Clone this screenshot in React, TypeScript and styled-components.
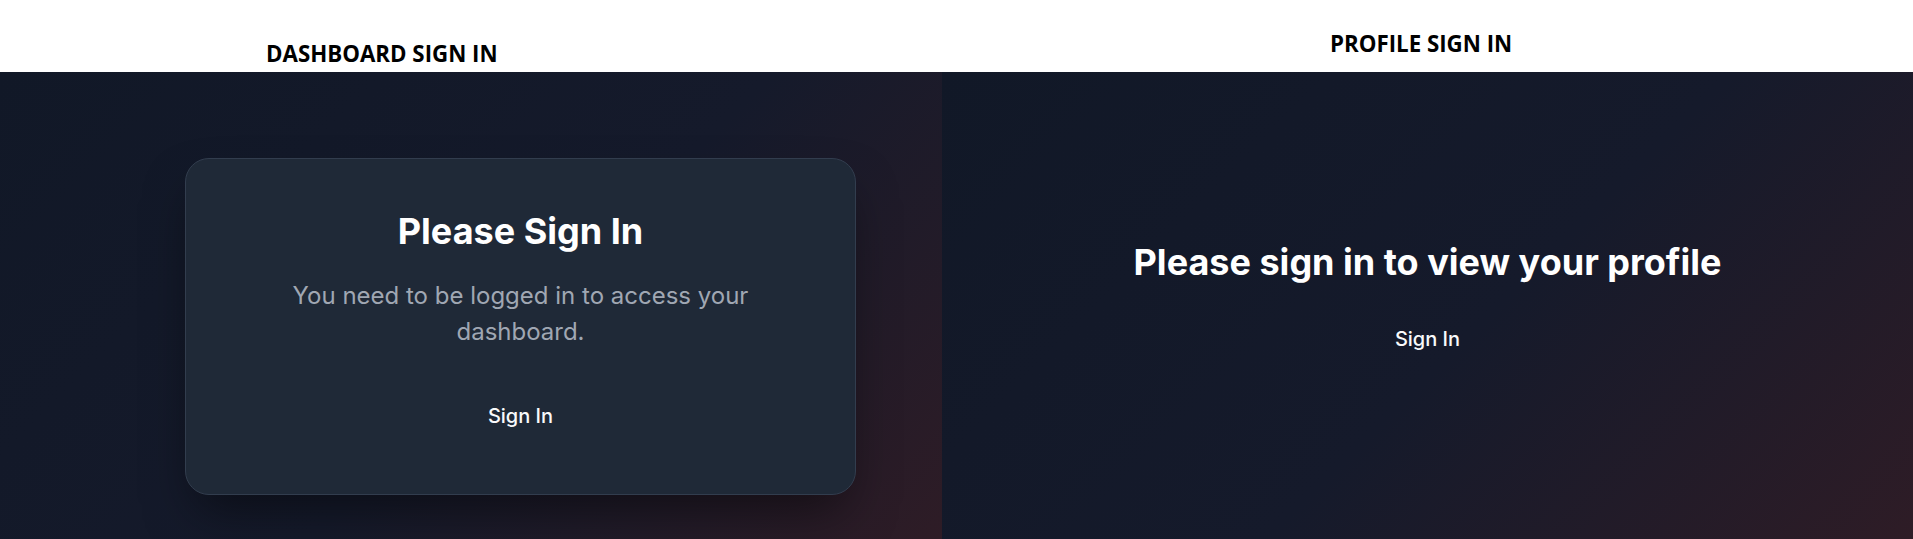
import React from "react";
import styled, { createGlobalStyle } from "styled-components";

const GlobalStyle = createGlobalStyle`
  html, body {
    margin: 0;
    padding: 0;
    background: #ffffff;
  }
  body {
    font-family: Inter, "Noto Sans", sans-serif;
    -webkit-font-smoothing: antialiased;
  }
  * { box-sizing: border-box; }
`;

const Page = styled.div`
  width: 1913px;
  height: 539px;
  overflow: hidden;
  display: flex;
  flex-direction: column;
`;

const LabelRow = styled.div`
  height: 72px;
  display: grid;
  grid-template-columns: 942px 1fr;
  background: #ffffff;
`;

const Label = styled.div<{ $left: number; $top: number }>`
  padding-left: ${(p) => p.$left}px;
  padding-top: ${(p) => p.$top}px;
  font-family: "Open Sans", "DejaVu Sans", sans-serif;
  font-weight: 700;
  font-size: 22.3px;
  line-height: 30px;
  color: #000000;
  white-space: nowrap;
`;

const PanelRow = styled.div`
  flex: 1;
  display: grid;
  grid-template-columns: 942px 1fr;
`;

const Panel = styled.section<{ $centered?: boolean }>`
  background: linear-gradient(135deg, #111827 0%, #151a2b 55%, #2e1c26 100%);
  display: flex;
  flex-direction: column;
  align-items: ${(p) => (p.$centered ? "center" : "flex-start")};
  justify-content: ${(p) => (p.$centered ? "center" : "flex-start")};
  padding: ${(p) => (p.$centered ? "0 0 4px" : "86px 0 0 185px")};
`;

const Card = styled.div`
  width: 671px;
  height: 337px;
  background: #1f2937;
  border: 1px solid #323d4e;
  border-radius: 24px;
  box-shadow: 0 25px 50px -12px rgba(0, 0, 0, 0.5);
  padding: 52px 48px;
  display: flex;
  flex-direction: column;
  align-items: center;
  text-align: center;
`;

const Title = styled.h2<{ $gap: number }>`
  margin: 0 0 ${(p) => p.$gap}px;
  font-family: Inter, "Noto Sans", sans-serif;
  font-weight: 700;
  font-size: 36px;
  line-height: 40px;
  color: #ffffff;
  white-space: nowrap;
`;

const Subtitle = styled.p`
  margin: 0 0 40px;
  font-family: Inter, "Noto Sans", sans-serif;
  font-weight: 400;
  font-size: 24px;
  line-height: 36px;
  color: #a0a7b3;
  max-width: 520px;
`;

const SignInButton = styled.button`
  background: transparent;
  border: none;
  padding: 12px 24px;
  font-family: Inter, "Noto Sans", sans-serif;
  font-weight: 500;
  font-size: 20px;
  line-height: 28px;
  color: #f9fafb;
  cursor: pointer;
`;

export default function App() {
  return (
    <>
      <GlobalStyle />
      <Page>
        <LabelRow>
          <Label $left={266} $top={39}>DASHBOARD SIGN IN</Label>
          <Label $left={388} $top={29}>PROFILE SIGN IN</Label>
        </LabelRow>
        <PanelRow>
          <Panel>
            <Card>
              <Title $gap={27}>Please Sign In</Title>
              <Subtitle>You need to be logged in to access your dashboard.</Subtitle>
              <SignInButton>Sign In</SignInButton>
            </Card>
          </Panel>
          <Panel $centered>
            <Title $gap={31}>Please sign in to view your profile</Title>
            <SignInButton>Sign In</SignInButton>
          </Panel>
        </PanelRow>
      </Page>
    </>
  );
}
